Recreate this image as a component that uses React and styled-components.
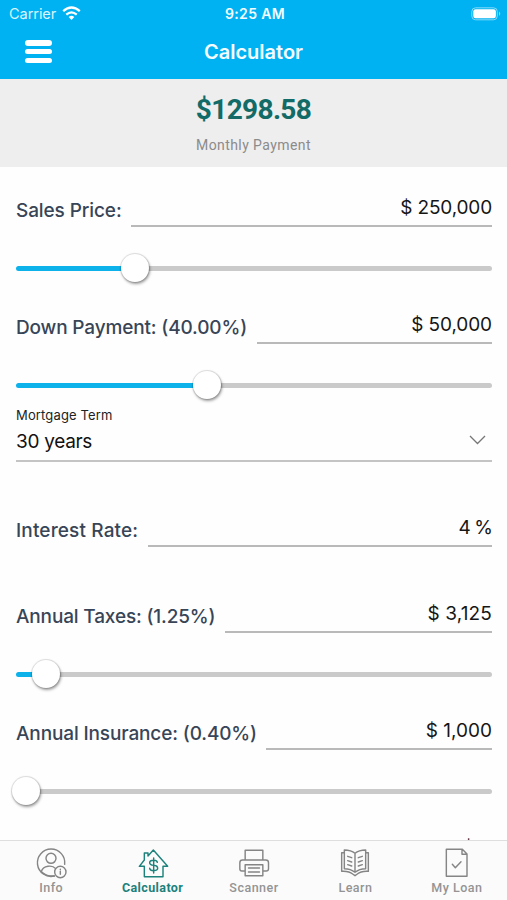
import React from "react";
import styled, { createGlobalStyle } from "styled-components";

const Global = createGlobalStyle`
  * { box-sizing: border-box; }
  html, body { margin: 0; padding: 0; background: #fff; }
  body { font-family: Inter, "Liberation Sans", sans-serif; }
`;
const Phone = styled.div`
  width: 507px; height: 900px; overflow: hidden;
  display: flex; flex-direction: column; background: #fefefe;
`;
const Header = styled.header`
  height: 79px; flex: none; background: #00b2f2; color: #f4fcff;
`;
const StatusBar = styled.div`
  height: 27px; padding: 0 6px 0 9px;
  display: grid; grid-template-columns: 1fr auto 1fr; align-items: center;
`;
const Carrier = styled.div`
  display: flex; align-items: center; gap: 6px;
  font-size: 14.5px; letter-spacing: -0.05px; color: #d9f5ff;
`;
const Clock = styled.div`font-size: 14px; font-weight: 600; letter-spacing: 0.35px;`;
const Battery = styled.svg`justify-self: end; display: block;`;
const TitleBar = styled.div`
  height: 50px; padding: 0 24px;
  display: grid; grid-template-columns: 1fr auto 1fr; align-items: center;
`;
const MenuButton = styled.button`
  border: 0; background: none; width: 29px; height: 26px;
  display: flex; flex-direction: column; justify-content: space-between;
  padding: 1px 1px 2px;
`;
const MenuBar = styled.span`height: 5.5px; width: 27px; border-radius: 3px; background: #fff;`;
const Title = styled.h1`margin: 0; font-size: 20px; font-weight: 600; letter-spacing: 0;`;
const Summary = styled.section`
  height: 88px; flex: none; background: #eee; text-align: center;
  font-family: Roboto, sans-serif; padding-top: 14px;
`;
const Amount = styled.div`
  font-size: 28px; line-height: 34px; font-weight: 700; letter-spacing: -0.65px; color: #126b66;
`;
const Caption = styled.div`
  margin-top: 8px; font-size: 14px; line-height: 20px; letter-spacing: 0.42px; color: #8b8b8b;
`;
const Form = styled.main`
  flex: 1; min-height: 0; overflow: hidden; padding: 18px 15px 0 16px;
`;
const Row = styled.div`
  display: flex; height: 42px; margin-top: ${(p) => p.$gap || 0}px;
`;
const Label = styled.label`
  flex: none; width: ${(p) => p.$width}px; padding-top: 14px;
  font-size: 19px; line-height: 24px; font-weight: 450; white-space: nowrap;
  letter-spacing: ${(p) => p.$spacing || 0}px; color: #384557;
`;
const Value = styled.div`
  flex: 1; text-align: right; border-bottom: 2px solid #b9b9b9;
  padding-top: 11px; font-size: 19px; line-height: 24px; color: #161616; white-space: nowrap;
  letter-spacing: ${(p) => p.$spacing || 0}px;
`;
const SliderBox = styled.div`height: 60px; padding-top: 39px;`;
const Track = styled.div`
  position: relative; height: 5px; border-radius: 3px;
  background: linear-gradient(to right, #0db2ea ${(p) => p.$at}px, #cacaca ${(p) => p.$at}px);
`;
const Knob = styled.span`
  position: absolute; top: -12px; left: ${(p) => p.$at - 14}px;
  width: 28px; height: 28px; border-radius: 50%; background: #fff;
  box-shadow: 0 0 1px 1px rgba(0,0,0,.13), 1px 2px 3px rgba(0,0,0,.38);
`;
const SelectBox = styled.div`height: 58px; border-bottom: 2px solid #c4c4c4;`;
const SelectCaption = styled.div`
  padding-top: 1px; font-size: 13px; line-height: 20px; letter-spacing: 0.15px; color: #222;
`;
const SelectValue = styled.div`
  display: flex; justify-content: space-between; align-items: center; padding-right: 6px;
  margin-top: 3px; font-size: 19px; line-height: 28px; letter-spacing: -0.3px; color: #111;
`;
const Chevron = styled.svg`margin-top: -4px;`;
const TabBar = styled.nav`
  height: 60px; flex: none; display: flex; background: #fbfbfb; border-top: 1px solid #dedede;
`;
const Tab = styled.div`
  flex: 1; display: flex; flex-direction: column; align-items: center; padding: 6px 0 0 1px;
  color: ${(p) => (p.$active ? "#1d817c" : "#949494")};
  font: ${(p) => (p.$active ? 700 : 500)} 12.5px/16px Roboto, sans-serif;
  letter-spacing: ${(p) => (p.$active ? 0.4 : 0.5)}px;
`;
const TabIcon = styled.svg`
  width: 32px; height: 32px; flex: none; margin-bottom: 1px;
  fill: none; stroke: ${(p) => (p.$active ? "#1d817c" : "#858585")};
  stroke-width: 4.3; stroke-linejoin: round; stroke-linecap: round;
`;

const Slider = ({ at }) => (
  <SliderBox><Track $at={at}><Knob $at={at} /></Track></SliderBox>
);

const icons = {
  Info: (
    <TabIcon viewBox="105 51 96 96">
      <path d="M163 138A41 41 0 1 1 194 103" />
      <circle cx="153" cy="85" r="15" />
      <path d="M124 125C129 105 158 105 166 115M124 125Q140 140 163 138" />
      <circle cx="181" cy="126" r="17" />
      <path d="M181 124V133M181 118V118.5" />
    </TabIcon>
  ),
  Calculator: (
    <TabIcon $active viewBox="408 51 96 96">
      <path d="M457 60L441 78V69H430V90L415 109H430V140H486V109H500Z" />
      <path d="M469 97Q468 91 458 91Q446 91 446 98Q446 105 458 106Q470 107 470 115Q470 122 458 122Q447 122 446 115M458 84V129" />
    </TabIcon>
  ),
  Scanner: (
    <TabIcon viewBox="112.5 51 96 96">
      <path d="M134 90V61H187V90M134 123H124Q118 123 118 116V98Q118 90 126 90H196Q204 90 204 98V116Q204 123 197 123H187M134 104H187V137H134ZM144 114H177M144 126H177" />
    </TabIcon>
  ),
  Learn: (
    <TabIcon viewBox="0 0 96 96">
      <path d="M48 19C40 12 28 9 16 9V65C29 65 40 69 48 76C56 69 67 65 80 65V9C68 9 56 12 48 19ZM48 19V76M16 17H8V73C24 72 34 75 41 81L48 86L55 81C62 75 72 72 88 73V17H80M26 28L38 32M26 41L38 45M26 53L38 57M70 28L58 32M70 41L58 45M70 53L58 57" />
    </TabIcon>
  ),
  "My Loan": (
    <TabIcon viewBox="241 81 96 96">
      <path d="M257 88H305L319 102V169H257ZM304 88V103H319M275 133L284 143L301 125" />
    </TabIcon>
  ),
};

export default function App() {
  return (
    <Phone>
      <Global />
      <Header>
        <StatusBar>
          <Carrier>
            Carrier
            <svg width="19" height="15" viewBox="0 0 19 15" fill="none" stroke="#fff" strokeWidth="2.3">
              <path d="M1.2 5.1Q9.5 -2 17.8 5.1M4.3 8.6Q9.5 4.2 14.7 8.6" />
              <path d="M6.7 11Q9.5 8.7 12.3 11L9.5 14Z" fill="#fff" stroke="none" />
            </svg>
          </Carrier>
          <Clock>9:25 AM</Clock>
          <Battery width="30" height="14" viewBox="0 0 30 14">
            <rect x=".8" y=".8" width="25.5" height="12" rx="3.8" fill="none" stroke="#83d9f8" />
            <rect x="2.3" y="2.3" width="22.6" height="9" rx="2.3" fill="#fff" />
            <path d="M28 4.6Q30.5 6.8 28 9Z" fill="#83d9f8" />
          </Battery>
        </StatusBar>
        <TitleBar>
          <MenuButton aria-label="Menu"><MenuBar /><MenuBar /><MenuBar /></MenuButton>
          <Title>Calculator</Title>
        </TitleBar>
      </Header>
      <Summary>
        <Amount>$1298.58</Amount>
        <Caption>Monthly Payment</Caption>
      </Summary>
      <Form>
        <Row><Label $width={115} $spacing={-0.1}>Sales Price:</Label><Value $spacing={-0.15}>$ 250,000</Value></Row>
        <Slider at={119} />
        <Row $gap={15}><Label $width={241} $spacing={-0.15}>Down Payment: (40.00%)</Label><Value $spacing={-0.1}>$ 50,000</Value></Row>
        <Slider at={190.5} />
        <SelectBox>
          <SelectCaption>Mortgage Term</SelectCaption>
          <SelectValue>
            30 years
            <Chevron width="17" height="10" viewBox="0 0 17 10" fill="none" stroke="#777" strokeWidth="1.3">
              <path d="M1 1L8.5 8.5L16 1" />
            </Chevron>
          </SelectValue>
        </SelectBox>
        <Row $gap={43}><Label $width={132} $spacing={0.15}>Interest Rate:</Label><Value $spacing={-0.9}>4 %</Value></Row>
        <Row $gap={44}><Label $width={209} $spacing={-0.15}>Annual Taxes: (1.25%)</Label><Value $spacing={0.15}>$ 3,125</Value></Row>
        <Slider at={29.5} />
        <Row $gap={15}><Label $width={250} $spacing={-0.13}>Annual Insurance: (0.40%)</Label><Value>$ 1,000</Value></Row>
        <Slider at={9.5} />
        <Row $gap={15}><Value>$ 0</Value></Row>
      </Form>
      <TabBar>
        {Object.keys(icons).map((name) => (
          <Tab key={name} $active={name === "Calculator"}>{icons[name]}{name}</Tab>
        ))}
      </TabBar>
    </Phone>
  );
}
